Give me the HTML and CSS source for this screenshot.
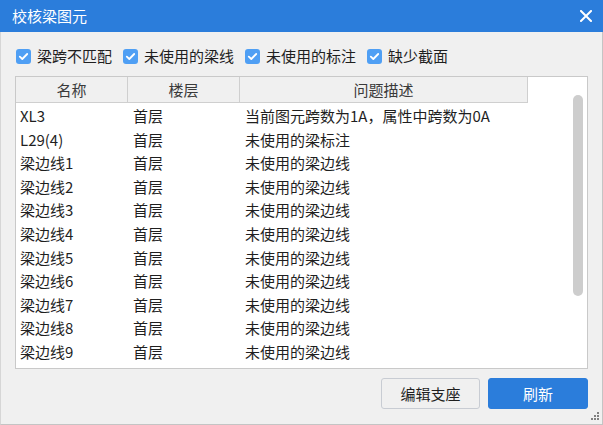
FILE: index.html
```html
<!DOCTYPE html>
<html lang="zh-CN">
<head>
<meta charset="utf-8">
<title>校核梁图元</title>
<link rel="stylesheet" href="styles.css">
</head>
<body>
<div class="window">
  <div class="titlebar">
    <span class="title">校核梁图元</span>
    <span class="close"><svg width="12" height="12" viewBox="0 0 12 12"><path d="M1 1L11 11M11 1L1 11" stroke="#fff" stroke-width="2" stroke-linecap="square"/></svg></span>
  </div>
  <div class="options">
    <label class="opt"><span class="cb"><svg width="15" height="15" viewBox="0 0 15 15"><path d="M3.8 7.6L6.3 10L11.2 5" fill="none" stroke="#fff" stroke-width="1.8" stroke-linecap="round" stroke-linejoin="round"/></svg></span>梁跨不匹配</label>
    <label class="opt"><span class="cb"><svg width="15" height="15" viewBox="0 0 15 15"><path d="M3.8 7.6L6.3 10L11.2 5" fill="none" stroke="#fff" stroke-width="1.8" stroke-linecap="round" stroke-linejoin="round"/></svg></span>未使用的梁线</label>
    <label class="opt"><span class="cb"><svg width="15" height="15" viewBox="0 0 15 15"><path d="M3.8 7.6L6.3 10L11.2 5" fill="none" stroke="#fff" stroke-width="1.8" stroke-linecap="round" stroke-linejoin="round"/></svg></span>未使用的标注</label>
    <label class="opt"><span class="cb"><svg width="15" height="15" viewBox="0 0 15 15"><path d="M3.8 7.6L6.3 10L11.2 5" fill="none" stroke="#fff" stroke-width="1.8" stroke-linecap="round" stroke-linejoin="round"/></svg></span>缺少截面</label>
  </div>
  <div class="tablebox">
    <div class="grid head">
      <div class="th">名称</div>
      <div class="th">楼层</div>
      <div class="th">问题描述</div>
    </div>
    <div class="rows">
      <div class="grid row"><div class="td">XL3</div><div class="td">首层</div><div class="td">当前图元跨数为1A，属性中跨数为0A</div></div>
      <div class="grid row"><div class="td">L29(4)</div><div class="td">首层</div><div class="td">未使用的梁标注</div></div>
      <div class="grid row"><div class="td">梁边线1</div><div class="td">首层</div><div class="td">未使用的梁边线</div></div>
      <div class="grid row"><div class="td">梁边线2</div><div class="td">首层</div><div class="td">未使用的梁边线</div></div>
      <div class="grid row"><div class="td">梁边线3</div><div class="td">首层</div><div class="td">未使用的梁边线</div></div>
      <div class="grid row"><div class="td">梁边线4</div><div class="td">首层</div><div class="td">未使用的梁边线</div></div>
      <div class="grid row"><div class="td">梁边线5</div><div class="td">首层</div><div class="td">未使用的梁边线</div></div>
      <div class="grid row"><div class="td">梁边线6</div><div class="td">首层</div><div class="td">未使用的梁边线</div></div>
      <div class="grid row"><div class="td">梁边线7</div><div class="td">首层</div><div class="td">未使用的梁边线</div></div>
      <div class="grid row"><div class="td">梁边线8</div><div class="td">首层</div><div class="td">未使用的梁边线</div></div>
      <div class="grid row"><div class="td">梁边线9</div><div class="td">首层</div><div class="td">未使用的梁边线</div></div>
    </div>
    <div class="scrollbar"></div>
  </div>
  <div class="buttons">
    <button class="btn">编辑支座</button>
    <button class="btn primary">刷新</button>
  </div>
  <svg class="grip" width="10" height="10" viewBox="0 0 10 10">
    <rect x="7" y="1" width="2" height="2" fill="#808080"/>
    <rect x="4" y="4" width="2" height="2" fill="#808080"/>
    <rect x="7" y="4" width="2" height="2" fill="#808080"/>
    <rect x="1" y="7" width="2" height="2" fill="#808080"/>
    <rect x="4" y="7" width="2" height="2" fill="#808080"/>
    <rect x="7" y="7" width="2" height="2" fill="#808080"/>
  </svg>
</div>
</body>
</html>
```

FILE: styles.css
```css
* { box-sizing: border-box; }
html, body { margin: 0; padding: 0; }
body {
  width: 603px;
  height: 425px;
  overflow: hidden;
  background: #f0f0f0;
  font-family: "Noto Sans CJK SC", "Noto Sans", sans-serif;
  font-size: 15px;
  color: #1f1f1f;
}
.window {
  position: relative;
  width: 603px;
  height: 425px;
  background: #f0f0f0;
  border-left: 1px solid #d6d6d6;
  border-right: 1px solid #c4c4c4;
  border-bottom: 1px solid #c4c4c4;
}
.titlebar {
  height: 32px;
  margin-left: -1px;
  margin-right: -1px;
  background: #2b7ddb;
  display: flex;
  align-items: center;
  justify-content: space-between;
  padding: 0 11px 0 12px;
  color: #fff;
}
.title { font-size: 15px; line-height: 20px; }
.close { display: flex; width: 12px; height: 12px; }
.options {
  display: flex;
  align-items: center;
  height: 20px;
  margin-top: 14px;
  padding-left: 15px;
}
.opt {
  display: flex;
  align-items: center;
  line-height: 20px;
  margin-right: 11px;
  color: #1f1f1f;
}
.cb {
  width: 15px;
  height: 15px;
  border-radius: 3px;
  background: #4f9ff4;
  margin-right: 6px;
  display: flex;
}
.tablebox {
  position: relative;
  margin: 10px 0 0 14px;
  width: 573px;
  height: 293px;
  background: #fff;
  border: 1px solid #c9c9c9;
  overflow: hidden;
}
.grid {
  display: grid;
  grid-template-columns: 112px 112px 288px;
}
.head { height: 25px; }
.th {
  background: #f0f0f0;
  border-right: 1px solid #cfcfcf;
  border-bottom: 1px solid #cfcfcf;
  text-align: center;
  line-height: 24px;
  padding-top: 1px;
  color: #3a3a3a;
}
.rows { padding-top: 2px; }
.row { height: 23.6px; }
.td {
  line-height: 23.6px;
  padding-left: 4px;
  white-space: nowrap;
  color: #1f1f1f;
}
.row .td:nth-child(2) { padding-left: 5px; }
.row .td:nth-child(3) { padding-left: 5px; }
.scrollbar {
  position: absolute;
  left: 557px;
  top: 18px;
  width: 10px;
  height: 201px;
  border-radius: 5px;
  background: #cdcdcd;
}
.buttons {
  display: flex;
  justify-content: flex-end;
  gap: 8px;
  margin-top: 9px;
  padding-right: 14px;
}
.btn {
  font-family: "Noto Sans CJK SC", "Noto Sans", sans-serif;
  font-size: 15px;
  height: 31px;
  width: 99px;
  padding: 0;
  border: 1px solid #c8ccd3;
  border-radius: 3px;
  background: #f0f0f0;
  color: #1f1f1f;
  line-height: 28px;
}
.btn.primary {
  width: 100px;
  background: #2b7ddb;
  border-color: #2b7ddb;
  color: #fff;
}
.grip {
  position: absolute;
  right: 2px;
  bottom: 3px;
}
```
